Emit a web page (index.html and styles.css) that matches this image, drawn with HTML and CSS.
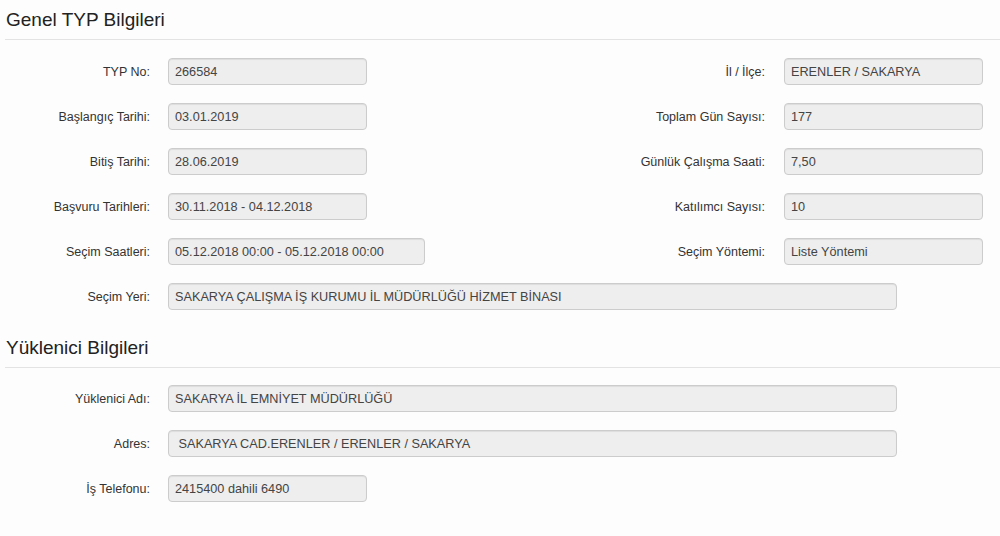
FILE: index.html
```html
<!DOCTYPE html>
<html>

<head>
    <meta charset="utf-8">
    <title>TYP Bilgileri</title>
    <link rel="stylesheet" href="styles.css">
</head>

<body>
    <div class="section">
        <h2 class="section-title">Genel TYP Bilgileri</h2>
        <div class="fields">
            <div class="row">
                <div class="field half">
                    <label>TYP No:</label>
                    <div class="control">266584</div>
                </div>
                <div class="field">
                    <label>İl / İlçe:</label>
                    <div class="control r">ERENLER / SAKARYA</div>
                </div>
            </div>
            <div class="row">
                <div class="field half">
                    <label>Başlangıç Tarihi:</label>
                    <div class="control">03.01.2019</div>
                </div>
                <div class="field">
                    <label>Toplam Gün Sayısı:</label>
                    <div class="control r">177</div>
                </div>
            </div>
            <div class="row">
                <div class="field half">
                    <label>Bitiş Tarihi:</label>
                    <div class="control">28.06.2019</div>
                </div>
                <div class="field">
                    <label>Günlük Çalışma Saati:</label>
                    <div class="control r">7,50</div>
                </div>
            </div>
            <div class="row">
                <div class="field half">
                    <label>Başvuru Tarihleri:</label>
                    <div class="control">30.11.2018 - 04.12.2018</div>
                </div>
                <div class="field">
                    <label>Katılımcı Sayısı:</label>
                    <div class="control r">10</div>
                </div>
            </div>
            <div class="row">
                <div class="field half">
                    <label>Seçim Saatleri:</label>
                    <div class="control mid">05.12.2018 00:00 - 05.12.2018 00:00</div>
                </div>
                <div class="field">
                    <label>Seçim Yöntemi:</label>
                    <div class="control r">Liste Yöntemi</div>
                </div>
            </div>
            <div class="row">
                <div class="field">
                    <label>Seçim Yeri:</label>
                    <div class="control wide">SAKARYA ÇALIŞMA İŞ KURUMU İL MÜDÜRLÜĞÜ HİZMET BİNASI</div>
                </div>
            </div>
        </div>
    </div>

    <div class="section">
        <h2 class="section-title">Yüklenici Bilgileri</h2>
        <div class="fields">
            <div class="row">
                <div class="field">
                    <label>Yüklenici Adı:</label>
                    <div class="control wide">SAKARYA İL EMNİYET MÜDÜRLÜĞÜ</div>
                </div>
            </div>
            <div class="row">
                <div class="field">
                    <label>Adres:</label>
                    <div class="control wide">&nbsp;SAKARYA CAD.ERENLER / ERENLER / SAKARYA</div>
                </div>
            </div>
            <div class="row">
                <div class="field">
                    <label>İş Telefonu:</label>
                    <div class="control">2415400 dahili 6490</div>
                </div>
            </div>
        </div>
    </div>
</body>

</html>
```

FILE: styles.css
```css
body {
    margin: 0;
    background: #fdfdfd;
    color: #333;
    font-family: "Liberation Sans", Arial, sans-serif;
    font-size: 12.5px;
}

.section-title {
    margin: 0 0 0 5px;
    padding: 8px 0 7px 1px;
    font-size: 19px;
    font-weight: normal;
    line-height: 24px;
    color: #222;
    border-bottom: 1px solid #e3e3e3;
}

.fields {
    padding-top: 18px;
}

.section + .section .fields {
    padding-top: 17px;
}

.row {
    display: flex;
    margin-bottom: 18px;
}

.field {
    display: flex;
    align-items: center;
}

.field.half {
    width: 615px;
}

.field label {
    width: 150px;
    margin-right: 18px;
    text-align: right;
}

.control {
    box-sizing: border-box;
    width: 199px;
    height: 27px;
    line-height: 26px;
    padding: 0 6px;
    background: #eee;
    border: 1px solid #ccc;
    border-radius: 4px;
    box-shadow: inset 0 1px 1px rgba(0, 0, 0, .075);
    color: #444;
    font-size: 12.7px;
    white-space: nowrap;
    overflow: hidden;
}

.control.r {
    margin-left: 1px;
}

.control.mid {
    width: 257px;
}

.control.wide {
    width: 729px;
}
```
